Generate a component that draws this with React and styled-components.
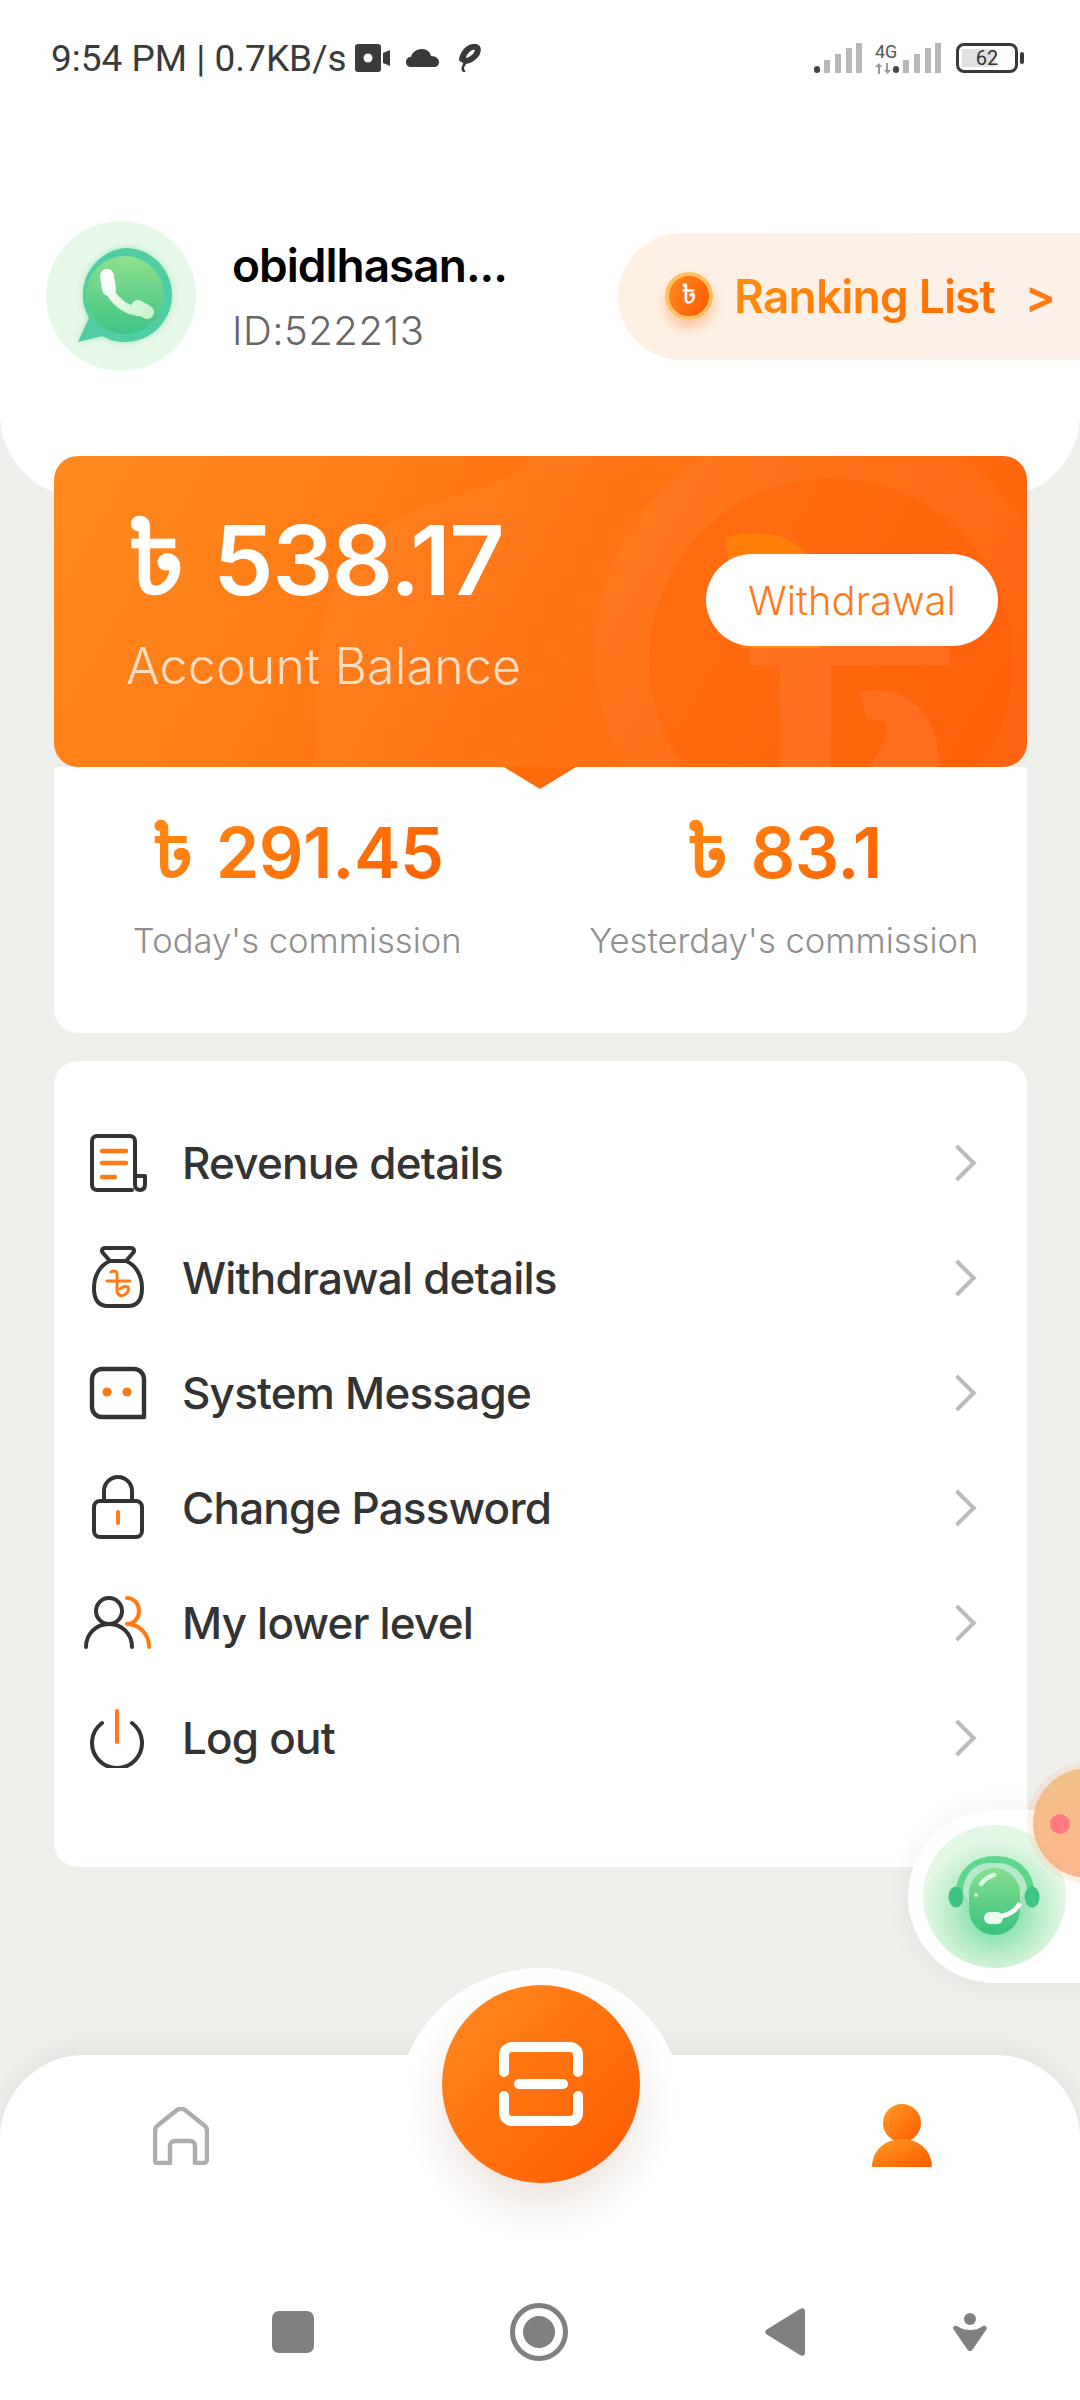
import React from 'react';
import styled, { createGlobalStyle } from 'styled-components';

const ORANGE = 'linear-gradient(120deg, #ff8a20 0%, #ff5a00 100%)';

const MENU = [
	{ label: 'Revenue details', icon: <RevenueIcon /> },
	{ label: 'Withdrawal details', icon: <BagIcon /> },
	{ label: 'System Message', icon: <MessageIcon /> },
	{ label: 'Change Password', icon: <LockIcon /> },
	{ label: 'My lower level', icon: <UsersIcon /> },
	{ label: 'Log out', icon: <PowerIcon /> },
];

function GradDef({ id }) {
	return (
		<defs>
			<linearGradient id={id} x1="0" y1="0" x2="1" y2="1">
				<stop offset="0" stopColor="#ff9a24" />
				<stop offset="1" stopColor="#ff5c00" />
			</linearGradient>
		</defs>
	);
}

function RevenueIcon() {
	return (
		<svg width="60" height="60" viewBox="3 0 60 60" fill="none" strokeLinecap="round" strokeLinejoin="round">
			<path d="M47 57H12a5 5 0 0 1-5-5V8a5 5 0 0 1 5-5h33a5 5 0 0 1 5 5v44c0 3 2 5 5 5s5-2 5-6V43H50" stroke="#333" strokeWidth="4" />
			<path d="M17 18h24M17 30h24M17 44h13" stroke="#ff7a12" strokeWidth="4.4" />
		</svg>
	);
}

function BagIcon() {
	return (
		<svg width="60" height="66" viewBox="0 0 60 66" fill="none" strokeLinecap="round" strokeLinejoin="round">
			<path d="M17 3h26c3 0 4 3 2 5l-7 8H22l-7-8c-2-2-1-5 2-5Z" stroke="#333" strokeWidth="4" />
			<path d="M22 16C12 20 6 31 6 43c0 12 5 18 14 18h20c9 0 14-6 14-18 0-12-6-23-16-27" stroke="#333" strokeWidth="4" />
			<path d="M23 27c3-2 6-1 6 2v16c0 5 4 7 7 5 4-2 5-5 4-8-3-1-6 0-8 2M19 36h23" stroke="#ff7a12" strokeWidth="3" />
		</svg>
	);
}

function MessageIcon() {
	return (
		<svg width="60" height="54" viewBox="1 0 60 54" fill="none">
			<path d="M15 3h32a10 10 0 0 1 10 10v38H15A10 10 0 0 1 5 41V13A10 10 0 0 1 15 3Z" stroke="#333" strokeWidth="4.4" strokeLinejoin="round" />
			<circle cx="20" cy="26" r="4.6" fill="#ff7a12" />
			<circle cx="40" cy="26" r="4.6" fill="#ff7a12" />
		</svg>
	);
}

function LockIcon() {
	return (
		<svg width="60" height="66" viewBox="0 0 60 66" fill="none" strokeLinecap="round">
			<path d="M16 26V16a14 14 0 0 1 28 0v10" stroke="#333" strokeWidth="4" />
			<rect x="6" y="26" width="48" height="36" rx="6" stroke="#333" strokeWidth="4" />
			<path d="M30 37v11" stroke="#ff7a12" strokeWidth="4" />
		</svg>
	);
}

function UsersIcon() {
	return (
		<svg width="70" height="56" viewBox="0 0 70 56" fill="none" strokeLinecap="round">
			<circle cx="26" cy="16" r="13" stroke="#333" strokeWidth="4" />
			<path d="M3 52c0-13 10-23 23-23s23 10 23 23" stroke="#333" strokeWidth="4" />
			<path d="M44 3c7 0 12 6 12 13s-5 13-12 13M44 29c12 0 22 10 22 23" stroke="#ff7a12" strokeWidth="4" />
		</svg>
	);
}

function PowerIcon() {
	return (
		<svg width="60" height="60" viewBox="1 0 60 60" fill="none" strokeLinecap="round">
			<path d="M14 13a25 25 0 1 0 30 0" stroke="#333" strokeWidth="4" transform="translate(1 2)" />
			<path d="M30 3v31" stroke="#ff7a12" strokeWidth="4" />
		</svg>
	);
}

function WhatsappMark() {
	return (
		<svg width="150" height="150" viewBox="0 0 150 150">
			<defs>
				<linearGradient id="waFill" x1="0.5" y1="0" x2="0.5" y2="1">
					<stop offset="0" stopColor="#8fe08f" />
					<stop offset="1" stopColor="#3cc484" />
				</linearGradient>
				<linearGradient id="waPhone" x1="0" y1="0" x2="1" y2="1">
					<stop offset="0" stopColor="#ffffff" />
					<stop offset="1" stopColor="#c9f5cc" />
				</linearGradient>
				<filter id="waBlur"><feGaussianBlur stdDeviation="3" /></filter>
			</defs>
			<circle cx="75" cy="75" r="75" fill="#e6f8e8" />
			<path d="M79 27a47 47 0 1 1-23 88L32 121l11-24A47 47 0 0 1 79 27Z" fill="#9fe6b8" filter="url(#waBlur)" />
			<path d="M79 27a47 47 0 1 1-23 88L32 121l11-24A47 47 0 0 1 79 27Z" fill="#50cda3" />
			<circle cx="79" cy="74" r="39" fill="url(#waFill)" />
			<path d="M61 60c1 14 15 29 33 31" stroke="url(#waPhone)" strokeWidth="9" fill="none" />
			<path d="M61 55l2 13M92 86l9 5" stroke="url(#waPhone)" strokeWidth="14" strokeLinecap="round" />
		</svg>
	);
}

function HeadsetMark() {
	return (
		<svg width="143" height="143" viewBox="0 0 143 143">
			<defs>
				<radialGradient id="hsGlow" cx="0.5" cy="0.6" r="0.5">
					<stop offset="0" stopColor="#5fd49a" />
					<stop offset="0.6" stopColor="#b8edc7" />
					<stop offset="1" stopColor="#e2f7e4" />
				</radialGradient>
				<linearGradient id="hsHead" x1="0.5" y1="0" x2="0.5" y2="1">
					<stop offset="0" stopColor="#86e08d" />
					<stop offset="1" stopColor="#38c17f" />
				</linearGradient>
			</defs>
			<circle cx="71.5" cy="71.5" r="71.5" fill="url(#hsGlow)" />
			<path d="M36 68C37 45 54 34.5 72 34.5s35 10.500 36 33.500" stroke="#5ed68c" strokeWidth="7" fill="none" />
			<ellipse cx="33" cy="72" rx="7.5" ry="10.5" fill="#3fc486" />
			<ellipse cx="109" cy="72" rx="7.5" ry="10.5" fill="#3fc486" />
			<rect x="41" y="38" width="60" height="50" rx="25" fill="#b5e8c9" />
			<rect x="46" y="43" width="51" height="67" rx="25.5" fill="url(#hsHead)" />
			<path d="M58 59c4-5 8-8 13-9" stroke="#dcf8e0" strokeWidth="4.5" strokeLinecap="round" fill="none" />
			<circle cx="53" cy="70" r="2" fill="#c9f3d2" />
			<path d="M62 92c14 1 29-2 35-14" stroke="#fff" strokeWidth="5" fill="none" />
			<rect x="61" y="87" width="19" height="12" rx="6" fill="#e9fbec" />
		</svg>
	);
}

function ScanIcon() {
	return (
		<svg width="84" height="84" viewBox="0 0 84 84" fill="none" stroke="#fff" strokeLinecap="round" strokeWidth="10">
			<path d="M5 30V13a8 8 0 0 1 8-8h58a8 8 0 0 1 8 8v17" />
			<path d="M5 54v17a8 8 0 0 0 8 8h58a8 8 0 0 0 8-8V54" />
			<path d="M20 42h44" />
		</svg>
	);
}

function HomeIcon() {
	return (
		<svg width="56" height="58" viewBox="0 0 56 58" fill="none" stroke="#adadad" strokeWidth="4.4" strokeLinejoin="round">
			<path d="M3 56c-1-1-1-2-1-4V24c0-2 0-3 2-5L24 3c3-2 5-2 8 0l20 16c2 2 2 3 2 5v28c0 2-1 4-3 4h-9V39c0-3-2-5-5-5H22c-3 0-5 2-5 5v17H3Z" />
		</svg>
	);
}

function PersonIcon() {
	return (
		<svg width="60" height="64" viewBox="0 0 60 64">
			<GradDef id="personFill" />
			<circle cx="30" cy="19" r="19" fill="url(#personFill)" />
			<path d="M1 63c-2 0-1-3 0-7C4 43 16 35 30 35s26 8 29 21c1 4 1 7 0 7H1Z" fill="url(#personFill)" />
		</svg>
	);
}

function StatusIcons() {
	return (
		<IconRow>
			<svg width="35" height="28" viewBox="0 0 35 28">
				<rect width="26" height="28" rx="3" fill="#3a3a3a" />
				<circle cx="13" cy="14" r="4.5" fill="#fff" />
				<path d="M28 9l7-3v16l-7-3Z" fill="#3a3a3a" />
			</svg>
			<svg width="33" height="18" viewBox="0 0 33 18">
				<path d="M5 18c-3 0-5-2-5-5 0-3 2-5 5-5 1-5 6-8 11-8 5 0 8 3 9 7 5 0 8 3 8 6 0 3-2 5-5 5Z" fill="#3a3a3a" />
			</svg>
			<svg width="26" height="28" viewBox="0 0 26 28" fill="none" stroke="#3a3a3a" strokeLinecap="round">
				<path d="M7 15C9 7 15 2 21 3c3 1 2 6-1 9-3 3-6 5-10 5" strokeWidth="6" />
				<path d="M12 17c-3 3-6 8-3 10" strokeWidth="2.5" />
			</svg>
		</IconRow>
	);
}

function Signal() {
	return (
		<svg width="48" height="30" viewBox="0 0 48 30">
			<rect x="0" y="23" width="6" height="7" rx="3" fill="#444" />
			<rect x="10" y="17" width="6" height="13" fill="#b8b8b8" />
			<rect x="21" y="11" width="6" height="19" fill="#b8b8b8" />
			<rect x="32" y="5" width="6" height="25" fill="#b8b8b8" />
			<rect x="42" y="0" width="6" height="30" fill="#b8b8b8" />
		</svg>
	);
}

function DataArrows() {
	return (
		<svg width="16" height="11" viewBox="0 0 16 11" fill="#9a9a9a">
			<path d="M3 11V4H0l4-4 3 4H5v7ZM11 0v7H9l3.5 4L16 7h-3V0Z" />
		</svg>
	);
}

function NavSquare() {
	return (
		<svg width="42" height="42" viewBox="0 0 42 42">
			<rect width="42" height="42" rx="7" fill="#808080" />
		</svg>
	);
}

function NavCircle() {
	return (
		<svg width="58" height="58" viewBox="0 0 58 58">
			<circle cx="29" cy="29" r="26.5" fill="none" stroke="#808080" strokeWidth="5" />
			<circle cx="29" cy="29" r="16" fill="#808080" />
		</svg>
	);
}

function NavBack() {
	return (
		<svg width="40" height="48" viewBox="0 0 40 48">
			<path d="M1 26c-1-1-1-3 0-4L35 1c3-2 5 0 5 2v42c0 2-2 4-5 2Z" fill="#808080" />
		</svg>
	);
}

function NavAssist() {
	return (
		<svg width="34" height="38" viewBox="0 0 34 38">
			<circle cx="17" cy="6" r="6" fill="#808080" />
			<path d="M1 17c-2-2 0-5 3-4 5 3 8 4 13 4s8-1 13-4c3-1 5 2 3 4L20 36c-2 3-4 3-6 0Z" fill="#808080" />
		</svg>
	);
}

function App() {
	return (
		<>
			<GlobalStyle />
			<Screen>
				<Header>
					<StatusBar>
						<StatusLeft>
							<StatusText>9:54 PM | 0.7KB/s</StatusText>
							<StatusIcons />
						</StatusLeft>
						<StatusRight>
							<Signal />
							<NetworkTag>
								<span>4G</span>
								<DataArrows />
							</NetworkTag>
							<Signal />
							<Battery>
								<BatteryLevel />
								<BatteryText>62</BatteryText>
							</Battery>
						</StatusRight>
					</StatusBar>
					<Profile>
						<Avatar><WhatsappMark /></Avatar>
						<ProfileText>
							<UserName>obidlhasan...</UserName>
							<UserId>ID:522213</UserId>
						</ProfileText>
						<RankingPill>
							<Coin>৳</Coin>
							<RankingLabel>Ranking List</RankingLabel>
							<RankingArrow>&gt;</RankingArrow>
						</RankingPill>
					</Profile>
				</Header>

				<BalanceCard>
					<Decor width="973" height="311" viewBox="0 0 973 311">
						<path d="M477 0C440 40 385 40 343 62 290 95 270 140 265 200L260 311H973V0Z" fill="#ffffff" opacity="0.035" />
						<circle cx="776" cy="198" r="235" fill="#ffffff" opacity="0.03" />
						<circle cx="777" cy="204" r="182" fill="#ff5a00" opacity="0.3" />
						<path d="M671 82c30-10 85-10 96 50v60h-80Z" fill="#ff7f0a" />
						<path d="M695 188h200v21H777v102h-51V209h-31Z" fill="#ffffff" opacity="0.07" />
						<path d="M806 236c44-10 79 19 80 75h-71c15-21 21-36 15-46l-18-3Z" fill="#ffffff" opacity="0.07" />
					</Decor>
					<BalanceInfo>
						<BalanceAmount><Currency>৳</Currency> 538.17</BalanceAmount>
						<BalanceLabel>Account Balance</BalanceLabel>
					</BalanceInfo>
					<WithdrawButton>Withdrawal</WithdrawButton>
				</BalanceCard>

				<StatsCard>
					<Notch />
					<Stat>
						<StatValue><Currency>৳</Currency> 291.45</StatValue>
						<StatLabel>Today's commission</StatLabel>
					</Stat>
					<Stat>
						<StatValue><Currency>৳</Currency> 83.1</StatValue>
						<StatLabel>Yesterday's commission</StatLabel>
					</Stat>
				</StatsCard>

				<MenuCard>
					{MENU.map((item) => (
						<MenuRow key={item.label}>
							<MenuIcon>{item.icon}</MenuIcon>
							<MenuLabel>{item.label}</MenuLabel>
							<Chevron />
						</MenuRow>
					))}
				</MenuCard>

				<FloatingHelp>
					<HeadsetMark />
				</FloatingHelp>
				<FloatingBubble />

				<BottomNav>
					<NavBump />
					<ScanButton><ScanIcon /></ScanButton>
					<NavTab><HomeIcon /></NavTab>
					<NavTab><PersonIcon /></NavTab>
				</BottomNav>

				<SystemNav>
					<NavSquare />
					<NavCircle />
					<NavBack />
					<NavAssist />
				</SystemNav>
			</Screen>
		</>
	);
}

const GlobalStyle = createGlobalStyle`
	html, body {
		margin: 0;
		padding: 0;
		background: #eeeeea;
	}

	* {
		box-sizing: border-box;
	}
`;

const Screen = styled.div`
	position: relative;
	display: flex;
	flex-direction: column;
	width: 1080px;
	height: 2400px;
	overflow: hidden;
	background: #eeeeea;
	font-family: Inter, "Noto Sans Bengali", "Noto Sans", "DejaVu Sans", sans-serif;
`;

const Header = styled.header`
	height: 498px;
	background: #fff;
	border-radius: 0 0 84px 84px;
`;

const StatusBar = styled.div`
	display: flex;
	align-items: center;
	justify-content: space-between;
	height: 116px;
	padding: 0 62px 0 51px;
`;

const StatusLeft = styled.div`
	display: flex;
	align-items: center;
	gap: 8px;
`;

const StatusText = styled.span`
	font-family: Roboto, sans-serif;
	font-size: 37px;
	color: #3a3a3a;
`;

const IconRow = styled.div`
	display: flex;
	align-items: center;
	gap: 16px;
`;

const StatusRight = styled.div`
	display: flex;
	align-items: center;
`;

const NetworkTag = styled.div`
	display: flex;
	flex-direction: column;
	align-items: flex-start;
	width: 31px;
	margin: 0 -13px 0 13px;
	gap: 3px;
	font-family: Roboto, sans-serif;
	font-size: 18px;
	line-height: 17px;
	color: #555;
`;

const Battery = styled.div`
	position: relative;
	display: flex;
	align-items: center;
	justify-content: center;
	width: 62px;
	height: 30px;
	margin-left: 15px;
	border: 3px solid #3a3a3a;
	border-radius: 8px;

	&::after {
		content: '';
		position: absolute;
		right: -9px;
		top: 6px;
		width: 4px;
		height: 12px;
		border-radius: 2px;
		background: #3a3a3a;
	}
`;

const BatteryLevel = styled.div`
	position: absolute;
	left: 3px;
	top: 3px;
	bottom: 3px;
	width: 33px;
	background: #e0e0e0;
`;

const BatteryText = styled.span`
	position: relative;
	font-family: Roboto, sans-serif;
	font-size: 20px;
	color: #333;
`;

const Profile = styled.div`
	display: flex;
	align-items: center;
	margin-top: 105px;
	padding-left: 46px;
`;

const Avatar = styled.div`
	width: 150px;
	height: 150px;
	flex: none;
`;

const ProfileText = styled.div`
	display: flex;
	flex-direction: column;
	gap: 13px;
	margin-left: 36px;
	width: 386px;
`;

const UserName = styled.div`
	font-size: 46px;
	font-weight: 600;
	letter-spacing: -1px;
	color: #000;
`;

const UserId = styled.div`
	font-size: 40px;
	font-weight: 300;
	letter-spacing: 0.5px;
	color: #666;
`;

const RankingPill = styled.div`
	display: flex;
	align-items: center;
	height: 127px;
	flex: 1;
	padding-left: 47px;
	border-radius: 64px 0 0 64px;
	background: linear-gradient(90deg, #fff0e4, #fdf0ea);
`;

const Coin = styled.div`
	display: flex;
	align-items: center;
	justify-content: center;
	width: 48px;
	height: 48px;
	border: 4px solid #ffc062;
	border-radius: 50%;
	background: ${ORANGE};
	box-shadow: 0 8px 12px rgba(255, 120, 30, 0.35);
	color: #fff;
	font-size: 26px;
	font-weight: 500;
`;

const RankingLabel = styled.span`
	margin-left: 21px;
	font-size: 46px;
	font-weight: 600;
	letter-spacing: -0.8px;
	background: linear-gradient(135deg, #ff9010, #ff6a00);
	-webkit-background-clip: text;
	background-clip: text;
	color: transparent;
`;

const RankingArrow = styled.span`
	margin-left: 30px;
	font-size: 46px;
	font-weight: 600;
	color: #ff7a10;
`;

const BalanceCard = styled.section`
	position: relative;
	display: flex;
	align-items: flex-start;
	justify-content: space-between;
	height: 311px;
	margin: -42px 53px 0 54px;
	padding: 98px 29px 0 73px;
	border-radius: 24px;
	overflow: hidden;
	background: ${ORANGE};
`;

const Decor = styled.svg`
	position: absolute;
	left: 0;
	top: 0;
`;

const BalanceInfo = styled.div`
	position: relative;
	margin-top: -53px;
	margin-left: -1px;
`;

const BalanceAmount = styled.div`
	font-size: 96px;
	font-weight: 600;
	line-height: 116px;
	letter-spacing: -1.5px;
	color: #fff;
`;

const Currency = styled.span`
	margin-right: 0.06em;
	font-size: 1.04em;
	font-weight: 600;
`;

const BalanceLabel = styled.div`
	margin-top: 19px;
	font-size: 50px;
	font-weight: 300;
	line-height: 58px;
	letter-spacing: 0.2px;
	color: rgba(255, 255, 255, 0.75);
`;

const WithdrawButton = styled.button`
	position: relative;
	width: 292px;
	height: 92px;
	border: 0;
	border-radius: 46px;
	background: #fff;
	color: #ff7a1a;
	font-family: inherit;
	font-size: 40px;
	font-weight: 300;
`;

const StatsCard = styled.section`
	position: relative;
	display: grid;
	grid-template-columns: 1fr 1fr;
	height: 266px;
	margin: 0 53px 0 54px;
	padding-top: 44px;
	border-radius: 0 0 24px 24px;
	background: #fff;
`;

const Notch = styled.div`
	position: absolute;
	left: 450px;
	top: 0;
	width: 0;
	height: 0;
	border-left: 36px solid transparent;
	border-right: 36px solid transparent;
	border-top: 22px solid #ff6a0a;
`;

const Stat = styled.div`
	display: flex;
	flex-direction: column;
	align-items: center;
`;

const StatValue = styled.div`
	font-size: 70px;
	font-weight: 600;
	line-height: 82px;
	letter-spacing: -0.5px;
	background: linear-gradient(135deg, #ff8a15, #ff6000);
	-webkit-background-clip: text;
	background-clip: text;
	color: transparent;
`;

const StatLabel = styled.div`
	margin-top: 25px;
	font-size: 34.6px;
	font-weight: 300;
	line-height: 42px;
	color: #8f8f8f;
`;

const MenuCard = styled.section`
	height: 806px;
	margin: 28px 53px 0 54px;
	padding-top: 44px;
	border-radius: 24px;
	background: #fff;
`;

const MenuRow = styled.div`
	display: flex;
	align-items: center;
	height: 115px;
	padding-right: 56px;
`;

const MenuIcon = styled.div`
	display: flex;
	align-items: center;
	justify-content: center;
	width: 128px;
	flex: none;
`;

const MenuLabel = styled.span`
	flex: 1;
	font-size: 44px;
	font-weight: 500;
	letter-spacing: -0.8px;
	color: #333;
`;

const Chevron = styled.span`
	width: 26px;
	height: 26px;
	border-top: 4px solid #bbb;
	border-right: 4px solid #bbb;
	transform: rotate(45deg);
`;

const FloatingHelp = styled.div`
	position: absolute;
	left: 908px;
	top: 1810px;
	display: flex;
	align-items: center;
	width: 200px;
	height: 173px;
	padding-left: 15px;
	border-radius: 87px 0 0 87px;
	background: #fff;
	box-shadow: 0 0 30px rgba(0, 0, 0, 0.06);
`;

const FloatingBubble = styled.div`
	position: absolute;
	left: 1033px;
	top: 1768px;
	width: 110px;
	height: 110px;
	border-radius: 50%;
	background: linear-gradient(180deg, rgba(240, 190, 130, 0.92), rgba(255, 170, 125, 0.88));
	box-shadow: 0 0 0 6px rgba(255, 180, 140, 0.18);

	&::after {
		content: '';
		position: absolute;
		left: 17px;
		top: 46px;
		width: 20px;
		height: 20px;
		border-radius: 50%;
		background: #ff7a80;
	}
`;

const BottomNav = styled.nav`
	position: absolute;
	left: 0;
	right: 0;
	top: 2055px;
	display: flex;
	justify-content: space-between;
	height: 345px;
	padding: 49px 148px 0 153px;
	border-radius: 84px 84px 0 0;
	background: #fff;
	box-shadow: 0 -8px 24px rgba(0, 0, 0, 0.05);
`;

const NavBump = styled.div`
	position: absolute;
	left: 396px;
	top: -87px;
	width: 288px;
	height: 288px;
	border-radius: 50%;
	background: #fff;
`;

const ScanButton = styled.div`
	position: absolute;
	left: 442px;
	top: -70px;
	display: flex;
	align-items: center;
	justify-content: center;
	width: 198px;
	height: 198px;
	border-radius: 50%;
	background: linear-gradient(135deg, #ff8a20 0%, #ff5a00 100%);
	box-shadow: 0 22px 40px rgba(120, 60, 20, 0.14);
`;

const NavTab = styled.div`
	position: relative;
	display: flex;
	height: 64px;
	align-items: center;
`;

const SystemNav = styled.div`
	position: absolute;
	left: 170px;
	top: 2303px;
	display: grid;
	grid-template-columns: 246px 246px 246px 124px;
	align-items: center;
	justify-items: center;
	height: 58px;
`;

export default App;
